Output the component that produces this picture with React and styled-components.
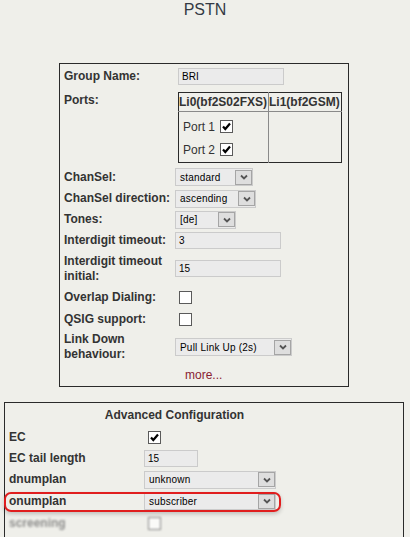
import React from 'react';
import styled, { createGlobalStyle } from 'styled-components';

const GlobalStyle = createGlobalStyle`
  body {
    margin: 0;
    background: #efefea;
    font-family: "Liberation Sans", Arial, sans-serif;
    color: #333;
  }
`;

const Page = styled.div`
  width: 410px;
  height: 537px;
  overflow: hidden;
`;

const Title = styled.h1`
  margin: 0 0 43px;
  font-size: 16px;
  font-weight: normal;
  line-height: 20px;
  text-align: center;
  color: #333a44;
`;

const Panel = styled.div`
  border: 1px solid #2a2a2a;
  margin-left: ${props => props.$left}px;
  width: ${props => props.$width}px;
  padding: 1px 0 0 4px;
  box-sizing: border-box;
`;

const Row = styled.div`
  position: relative;
  display: grid;
  grid-template-columns: ${props => props.$label}px 1fr;
  width: ${props => props.$width || 'auto'};
  height: ${props => props.$h}px;
  align-items: ${props => props.$top ? 'start' : 'center'};
`;

const Label = styled.div`
  font-size: 12px;
  font-weight: bold;
  line-height: 15px;
  color: ${props => props.$color || '#333'};
`;

const Heading = styled.div`
  grid-column: 1 / 3;
  text-align: center;
  font-size: 12px;
  font-weight: bold;
  color: #333;
`;

const TextInput = styled.div`
  width: ${props => props.$w}px;
  height: 17px;
  margin-left: ${props => props.$ml || 0}px;
  box-sizing: border-box;
  background: #ebebeb;
  border: 1px solid #cbcbcb;
  font-size: 10px;
  line-height: 15px;
  padding-left: 3px;
  color: #000;
`;

const SelectBox = styled.div`
  width: ${props => props.$w}px;
  height: 18px;
  box-sizing: border-box;
  display: flex;
  align-items: center;
  background: #ebebeb;
  border: 1px solid #cbcbcb;
  font-size: 10px;
  color: #000;
`;

const SelectText = styled.span`
  flex: 1;
  padding-left: 4px;
  letter-spacing: 0.2px;
`;

const ArrowBtn = styled.span`
  width: 17px;
  height: 15px;
  margin-right: 0;
  box-sizing: border-box;
  border: 1px solid #a5a5a5;
  background: #dedede;
  display: flex;
  align-items: center;
  justify-content: center;
`;

const Select = ({ w, children }) => (
  <SelectBox $w={w}>
    <SelectText>{children}</SelectText>
    <ArrowBtn>
      <svg width="8" height="6" viewBox="0 0 8 6">
        <path d="M1 1.5 L4 4.5 L7 1.5" stroke="#555" strokeWidth="1.8" fill="none" />
      </svg>
    </ArrowBtn>
  </SelectBox>
);

const Box = styled.span`
  display: inline-block;
  width: 13px;
  height: 13px;
  box-sizing: border-box;
  margin-left: ${props => props.$ml || 0}px;
  border: 1px solid #5a5a5a;
  background: #fff;
  vertical-align: middle;
  position: relative;
`;

const Checkbox = ({ checked, ml }) => (
  <Box $ml={ml}>
    {checked && (
      <svg width="11" height="11" viewBox="0 0 11 11" style={{ position: 'absolute', left: 0, top: 0 }}>
        <path d="M2 5.5 L4.3 8 L9 2.5" stroke="#000" strokeWidth="2.2" fill="none" />
      </svg>
    )}
  </Box>
);

const PortsTable = styled.table`
  margin: 5px 0 0 3px;
  border-collapse: collapse;
  border: 1px solid #2a2a2a;
  width: 164px;
  height: 71px;
`;

const PortsHead = styled.th`
  height: 18px;
  padding: 0;
  font-size: 12px;
  font-weight: bold;
  text-align: left;
  color: #333;
  border-bottom: 1px solid #8a8a8a;
  border-left: 1px solid #8a8a8a;
  white-space: nowrap;
  &:first-child { border-left: none; width: 89px; }
`;

const PortsCell = styled.td`
  padding: 3px 0 0 4px;
  vertical-align: top;
  border-left: 1px solid #8a8a8a;
  &:first-child { border-left: none; }
`;

const PortLine = styled.div`
  height: 23px;
  display: flex;
  align-items: center;
  gap: 5px;
  font-size: 12px;
  color: #333;
`;

const More = styled.div`
  grid-column: 2;
  padding-left: 10px;
  font-size: 12px;
  color: #8a2232;
`;

const AdvancedPanel = styled(Panel)`
  margin-top: 15px;
  height: 160px;
`;

const Highlight = styled.span`
  position: absolute;
  left: -5px;
  top: 2px;
  width: 277px;
  height: 20px;
  box-sizing: border-box;
  border: 2px solid #e01e1e;
  border-radius: 7px;
  box-shadow: 0 2px 4px rgba(0, 0, 0, 0.2);
  pointer-events: none;
`;

const Faded = styled.div`
  filter: blur(1.3px);
  opacity: 0.7;
`;

export default function App() {
  return (
    <Page>
      <GlobalStyle />
      <Title>PSTN</Title>

      <Panel $left={59} $width={290}>
        <Row $label={111} $h={22}>
          <Label>Group Name:</Label>
          <TextInput $w={106} $ml={3}>BRI</TextInput>
        </Row>
        <Row $label={111} $h={79} $top>
          <Label style={{ marginTop: 6 }}>Ports:</Label>
          <PortsTable>
            <thead>
              <tr>
                <PortsHead>Li0(bf2S02FXS)</PortsHead>
                <PortsHead>Li1(bf2GSM)</PortsHead>
              </tr>
            </thead>
            <tbody>
              <tr>
                <PortsCell>
                  <PortLine>Port 1 <Checkbox checked /></PortLine>
                  <PortLine>Port 2 <Checkbox checked /></PortLine>
                </PortsCell>
                <PortsCell />
              </tr>
            </tbody>
          </PortsTable>
        </Row>
        <Row $label={111} $h={22}>
          <Label>ChanSel:</Label>
          <Select w={78}>standard</Select>
        </Row>
        <Row $label={111} $h={21}>
          <Label>ChanSel direction:</Label>
          <Select w={81}>ascending</Select>
        </Row>
        <Row $label={111} $h={21}>
          <Label>Tones:</Label>
          <Select w={61}>[de]</Select>
        </Row>
        <Row $label={111} $h={21}>
          <Label>Interdigit timeout:</Label>
          <TextInput $w={106}>3</TextInput>
        </Row>
        <Row $label={111} $h={35}>
          <Label>Interdigit timeout initial:</Label>
          <TextInput $w={106}>15</TextInput>
        </Row>
        <Row $label={111} $h={22}>
          <Label>Overlap Dialing:</Label>
          <Checkbox ml={4} />
        </Row>
        <Row $label={111} $h={22}>
          <Label>QSIG support:</Label>
          <Checkbox ml={4} />
        </Row>
        <Row $label={111} $h={34}>
          <Label>Link Down behaviour:</Label>
          <Select w={117}>Pull Link Up (2s)</Select>
        </Row>
        <Row $label={111} $h={22}>
          <More>more...</More>
        </Row>
      </Panel>

      <AdvancedPanel $left={4} $width={400}>
        <Row $label={135} $h={22} $width="331px">
          <Heading>Advanced Configuration</Heading>
        </Row>
        <Row $label={135} $h={22} $width="331px">
          <Label>EC</Label>
          <Checkbox checked ml={4} />
        </Row>
        <Row $label={135} $h={21} $width="331px">
          <Label>EC tail length</Label>
          <TextInput $w={54}>15</TextInput>
        </Row>
        <Row $label={135} $h={21} $width="331px">
          <Label>dnumplan</Label>
          <Select w={132}>unknown</Select>
        </Row>
        <Row $label={135} $h={22} $width="331px">
          <Highlight />
          <Label>onumplan</Label>
          <Select w={132}>subscriber</Select>
        </Row>
        <Faded>
          <Row $label={135} $h={22} $width="331px">
            <Label $color="#666">screening</Label>
            <Checkbox ml={4} />
          </Row>
        </Faded>
      </AdvancedPanel>
    </Page>
  );
}
